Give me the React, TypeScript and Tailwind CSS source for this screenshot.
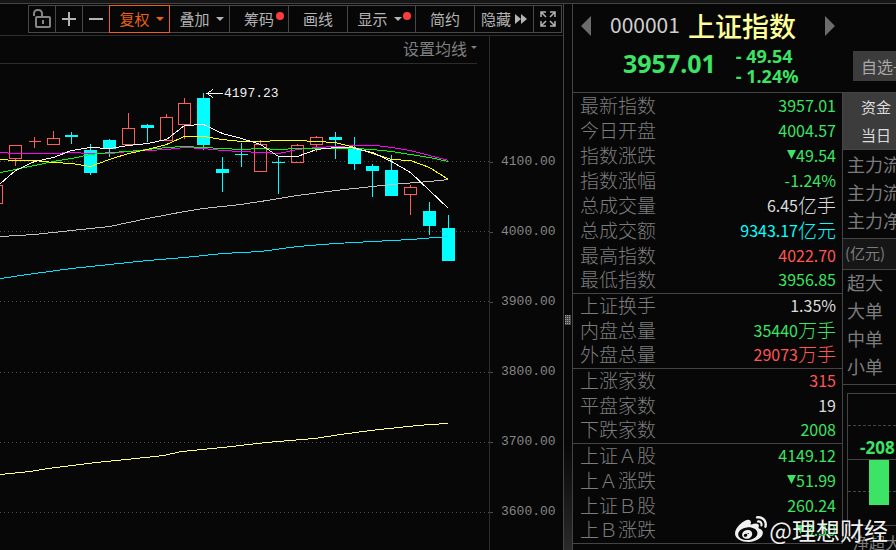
import React from 'react';
import { FaWeibo } from 'react-icons/fa';

const sans = "font-['Noto_Sans_CJK_SC',sans-serif]";
const latin = "font-['Noto_Sans',sans-serif]";
const mono = "font-['Liberation_Mono',monospace]";

type Tone = 'up' | 'down' | 'flat' | 'amount';

const toneClass: Record<Tone, string> = {
  up: 'text-[#ff5555]',
  down: 'text-[#3ce364]',
  flat: 'text-[#dcdcdc]',
  amount: 'text-[#00ffff]',
};

interface Quote {
  label: string;
  value: string;
  unit?: string;
  tone: Tone;
  falling?: boolean;
  last?: boolean;
}

const quotes: Quote[] = [
  { label: '最新指数', value: '3957.01', tone: 'down' },
  { label: '今日开盘', value: '4004.57', tone: 'down' },
  { label: '指数涨跌', value: '49.54', tone: 'down', falling: true },
  { label: '指数涨幅', value: '-1.24%', tone: 'down' },
  { label: '总成交量', value: '6.45', unit: '亿手', tone: 'flat' },
  { label: '总成交额', value: '9343.17', unit: '亿元', tone: 'amount' },
  { label: '最高指数', value: '4022.70', tone: 'up' },
  { label: '最低指数', value: '3956.85', tone: 'down', last: true },
  { label: '上证换手', value: '1.35%', tone: 'flat' },
  { label: '内盘总量', value: '35440', unit: '万手', tone: 'down' },
  { label: '外盘总量', value: '29073', unit: '万手', tone: 'up', last: true },
  { label: '上涨家数', value: '315', tone: 'up' },
  { label: '平盘家数', value: '19', tone: 'flat' },
  { label: '下跌家数', value: '2008', tone: 'down', last: true },
  { label: '上证Ａ股', value: '4149.12', tone: 'down' },
  { label: '上Ａ涨跌', value: '51.99', tone: 'down', falling: true },
  { label: '上证Ｂ股', value: '260.24', tone: 'down' },
  { label: '上Ｂ涨跌', value: '3.30', tone: 'down', falling: true, last: true },
];

// x, high, body top, body bottom, low, rising
type Candle = [number, number, number, number, number, boolean];

const candles: Candle[] = [
  [-4, 185, 185, 203, 203, true],
  [15, 145, 145, 158, 166, true],
  [34, 137, 141, 141, 148, true],
  [53, 131, 138, 144, 144, true],
  [71, 132, 135, 137, 144, false],
  [90, 144, 150, 173, 175, false],
  [109, 139, 140, 149, 157, false],
  [128, 113, 128, 144, 144, true],
  [147, 124, 125, 128, 142, false],
  [166, 114, 117, 140, 140, true],
  [184, 98, 103, 124, 139, true],
  [203, 93, 98, 145, 150, false],
  [222, 157, 169, 173, 192, false],
  [241, 143, 154, 155, 167, false],
  [260, 140, 144, 171, 171, true],
  [278, 156, 162, 163, 194, false],
  [297, 144, 145, 162, 162, true],
  [316, 136, 137, 144, 152, true],
  [335, 132, 137, 140, 159, false],
  [354, 137, 148, 164, 170, false],
  [372, 164, 166, 171, 197, false],
  [391, 155, 170, 196, 196, false],
  [410, 185, 187, 194, 215, true],
  [429, 202, 211, 226, 235, false],
  [448, 215, 228, 261, 261, false],
];

const averages = [
  {
    color: '#c0c0c0',
    points: '0,236 34,234 71,230 109,226 147,218 184,211 203,208 240,204 260,201 297,195 335,190 372,186 391,184 429,181 448,179',
  },
  {
    color: '#00e5ff',
    points: '0,278 34,273 71,268 109,264 147,260 184,257 222,253 260,251 297,246 335,243 372,241 410,239 448,236',
  },
  {
    color: '#ffff88',
    points: '0,474 30,471 48,468 96,462 126,459 163,455 181,451 222,447 266,442 314,438 340,434 370,430 407,426 429,424 448,423',
  },
  {
    color: '#ff00ff',
    points: '0,152 15,153 53,153 71,152 90,153 110,153 128,151 147,150 166,149 184,147 203,148 222,150 260,152 278,153 297,149 316,147 335,146 354,145 376,145 391,147 410,150 429,155 448,160',
  },
  {
    color: '#00ff00',
    points: '0,172 34,165 53,161 71,158 90,154 109,152 128,151 147,149 166,147 184,146 203,147 222,148 241,149 260,148 278,149 297,148 354,148 372,149 391,151 410,154 429,157 448,161',
  },
  {
    color: '#ffff00',
    points: '0,159 15,160 34,160 53,162 71,163 90,166 109,159 128,153 147,149 166,144 184,136 203,136 222,139 241,141 260,141 280,140 297,140 316,141 335,142 354,147 372,153 391,159 410,160 429,167 448,179',
  },
  {
    color: '#ffffff',
    points: '0,183 15,170 34,161 53,157 71,150 90,147 109,148 128,145 147,143 166,139 184,125 203,124 222,133 241,138 260,144 278,156 297,156 316,149 335,147 350,147 372,152 391,161 410,172 429,190 448,208',
  },
];

const gridLines = [161, 231, 301, 372, 442, 512];
const prices = ['4100.00', '4000.00', '3900.00', '3800.00', '3700.00', '3600.00'];

const Caret = () => (
  <svg className="h-1 w-2 shrink-0" viewBox="0 0 8 4" fill="currentColor">
    <path d="M0 0h8L4 4z" />
  </svg>
);

const Dot = () => <span className="absolute top-1.5 right-1 h-2 w-2 rounded-full bg-[#ff3c3c]" />;

interface ToolButtonProps {
  width: string;
  active?: boolean;
  label?: string;
  children: React.ReactNode;
}

const ToolButton: React.FC<ToolButtonProps> = ({ width, active, label, children }) => (
  <button
    type="button"
    aria-label={label}
    className={`relative -ml-px flex h-7 shrink-0 items-center justify-center border text-[15px] ${width} ${
      active ? 'z-10 border-[#f06010] text-[#f06010]' : 'border-[#484848] text-[#b4b4b4]'
    }`}
  >
    {children}
  </button>
);

const Toolbar = () => (
  <div className="flex h-[31px] shrink-0 items-start justify-end pt-px pr-px">
    <ToolButton width="w-7" label="解锁">
      <svg className="h-5 w-5" viewBox="0 0 20 20" fill="none" stroke="#858585" strokeWidth="2">
        <path d="M2 7V4.500a3.500 3.500 0 0 1 3.500-3.500h1a3.500 3.500 0 0 1 3.500 3.500V8" />
        <rect x="4" y="8" width="14" height="10" rx="1" />
        <path d="M11 11v4" />
      </svg>
    </ToolButton>
    <ToolButton width="w-7" label="放大">
      <svg className="h-4 w-4" viewBox="0 0 16 16" stroke="#b4b4b4" strokeWidth="2">
        <path d="M1 8h14M8 1v14" />
      </svg>
    </ToolButton>
    <ToolButton width="w-7" label="缩小">
      <svg className="h-4 w-4" viewBox="0 0 16 16" stroke="#b4b4b4" strokeWidth="2">
        <path d="M1 8h14" />
      </svg>
    </ToolButton>
    <ToolButton width="w-[61px] gap-1.5 pl-1" active>
      复权
      <Caret />
    </ToolButton>
    <ToolButton width="w-[61px] gap-1.5 pl-1">
      叠加
      <Caret />
    </ToolButton>
    <ToolButton width="w-[60px]">
      筹码
      <Dot />
    </ToolButton>
    <ToolButton width="w-[60px]">画线</ToolButton>
    <ToolButton width="w-[69px] gap-1.5 pr-1">
      显示
      <Caret />
      <Dot />
    </ToolButton>
    <ToolButton width="w-[60px]">简约</ToolButton>
    <ToolButton width="w-[60px] gap-1">
      隐藏
      <svg className="h-3 w-3" viewBox="0 0 12 12" fill="currentColor">
        <path d="M0 1l6 5-6 5zM6 1l6 5-6 5z" />
      </svg>
    </ToolButton>
    <ToolButton width="w-[29px]" label="全屏">
      <svg className="h-4 w-4" viewBox="0 0 16 16" fill="none" stroke="#b4b4b4" strokeWidth="1.500">
        <path d="M1 6V1h5M1 1l5 5M10 1h5v5M15 1l-5 5M1 10v5h5M1 15l5-5M15 10v5h-5M15 15l-5-5" />
      </svg>
    </ToolButton>
  </div>
);

const CandleChart = () => (
  <svg
    className="min-h-0 w-full flex-1"
    viewBox="0 64 489 486"
    preserveAspectRatio="xMinYMin meet"
    shapeRendering="crispEdges"
  >
    {gridLines.map((y) => (
      <path key={y} d={`M0 ${y + 0.5}H489`} stroke="#4c4c4c" strokeDasharray="1 3" />
    ))}
    {candles.map(([x, high, top, bottom, low, rising]) => (
      <g key={x} fill={rising ? 'none' : '#00ffff'} stroke={rising ? '#ff5c5c' : '#00ffff'}>
        <path d={`M${x + 0.5} ${high}V${top}M${x + 0.5} ${bottom}V${low}`} />
        {rising ? (
          <path d={`M${x - 5.5} ${top + 0.5}h12V${bottom + 0.5}h-12z`} />
        ) : (
          <rect x={x - 6} y={top} width="13" height={bottom - top} stroke="none" />
        )}
      </g>
    ))}
    <g fill="none" transform="translate(0.5 0.5)">
      {averages.map(({ color, points }) => (
        <polyline key={color} points={points} stroke={color} />
      ))}
    </g>
    <path d="M207 93.500H223M213 89.500L207 93.500L213 97.500" fill="none" stroke="#ffffff" />
    <text x="224" y="97" fill="#f0f0f0" fontSize="13" className={mono}>
      4197.23
    </text>
  </svg>
);

const PriceAxis = () => (
  <div className={`w-[74px] shrink-0 border-l border-[#2c2c2c] pt-[91px] text-[13px] text-[#868686] ${mono}`}>
    {prices.map((price) => (
      <div key={price} className="flex h-[70px] items-center gap-2">
        <span className="h-px w-[3px] bg-[#4c4c4c]" />
        {price}
      </div>
    ))}
  </div>
);

const ChartPanel = () => (
  <section className="flex min-w-0 flex-1 flex-col border-r border-[#444444]">
    <Toolbar />
    <div className="flex min-h-0 flex-1 overflow-hidden border-t border-[#2c2c2c]">
      <div className="flex min-w-0 flex-1 flex-col">
        <div className="mr-3 flex h-7 shrink-0 items-center justify-end border-b border-[#2c2c2c] pb-1">
          <button type="button" className="flex items-center gap-1 text-base text-[#808080]">
            设置均线
            <svg className="h-[3px] w-1.5" viewBox="0 0 6 3" fill="currentColor">
              <path d="M0 0h6L3 3z" />
            </svg>
          </button>
        </div>
        <CandleChart />
      </div>
      <PriceAxis />
    </div>
  </section>
);

const Splitter = () => (
  <div className="flex w-2 shrink-0 items-center justify-center bg-linear-to-b from-[#070707] from-80% to-[#2a2a2a] pt-[85px]">
    <svg className="h-2.5 w-1.5" viewBox="0 0 6 10" stroke="#a0a0a0" shapeRendering="crispEdges">
      <rect width="6" height="10" fill="#4c4c4c" stroke="none" />
      <path d="M0 .5h6M0 2.500h6M0 4.500h6M0 6.500h6M0 8.500h6" strokeDasharray="1 1" />
    </svg>
  </div>
);

const QuoteHeader = () => (
  <header className="flex h-[89px] shrink-0 border-b border-[#444444]">
    <div className="w-[270px] shrink-0">
      <div className="flex h-11 items-center pl-2">
        <button type="button" aria-label="上一个">
          <svg className="h-5 w-2.5" viewBox="0 0 10 20" fill="#6c6c6c">
            <path d="M10 0v20L0 10z" />
          </svg>
        </button>
        <span className="ml-[19px] pb-0.5 text-[21px] text-[#d0d0d0]">000001</span>
        <h1 className="ml-2 text-[27px] leading-8 font-medium text-[#ffff99]">上证指数</h1>
        <button type="button" aria-label="下一个" className="ml-[29px]">
          <svg className="h-5 w-2.5" viewBox="0 0 10 20" fill="#6c6c6c">
            <path d="M0 0v20l10-10z" />
          </svg>
        </button>
      </div>
      <div className={`flex h-10 items-center pb-1 pl-[50px] font-bold text-[#3ce364] ${latin}`}>
        <span className="pb-1 text-[25px]">3957.01</span>
        <span className="ml-5 text-lg leading-5">
          - 49.54
          <br />- 1.24%
        </span>
      </div>
    </div>
    <button type="button" className="mt-[47px] ml-2.5 h-[30px] w-20 shrink-0 bg-[#3c3c3c] pl-2 text-left text-base text-[#a8a8a8]">
      自选+
    </button>
  </header>
);

const QuoteTable = () => (
  <table className="w-[270px] shrink-0 table-fixed border-separate border-spacing-0 self-start border-r border-[#444444] pt-px">
    <tbody>
      {quotes.map(({ label, value, unit, tone, falling, last }) => (
        <tr key={label} className={`flex h-[25px] items-center justify-between pr-1.5 pb-1 pl-[7px] ${last ? 'border-b border-[#444444]' : ''}`}>
          <th scope="row" className="text-[19px] leading-6 font-light text-[#7c7c7c]">
            {label}
          </th>
          <td className={`flex items-center text-base leading-6 ${toneClass[tone]}`}>
            {falling && (
              <svg className="h-[9px] w-[9px]" viewBox="0 0 9 9" fill="currentColor">
                <path d="M0 0h9L4.500 9z" />
              </svg>
            )}
            {value}
            {unit && <span className="text-[19px] font-light">{unit}</span>}
          </td>
        </tr>
      ))}
    </tbody>
  </table>
);

const FundFlow = () => (
  <aside className="flex min-w-0 flex-1 flex-col overflow-hidden whitespace-nowrap text-[#7c7c7c]">
    <div className="flex h-[57px] shrink-0 flex-col items-start border-b border-[#444444] bg-[#3c3c3c] pl-[18px] text-[15px] leading-7 text-[#dcdcdc]">
      <button type="button">资金</button>
      <button type="button">当日</button>
    </div>
    <div className="h-[88px] shrink-0 pl-1 text-lg leading-7">
      <p>主力流入</p>
      <p>主力流出</p>
      <p>主力净额</p>
    </div>
    <p className="h-8 shrink-0 border-y border-[#444444] bg-[#161616] pl-0.5 text-[15px] leading-7">(亿元)</p>
    <div className="flex h-[115px] shrink-0 flex-col justify-end border-b border-[#444444] pb-1 pl-1 text-lg leading-7">
      <p>超大</p>
      <p>大单</p>
      <p>中单</p>
      <p>小单</p>
    </div>
    <div className="mt-2 ml-1 h-[133px] shrink-0 border border-r-0 border-[#444444]">
      <div className={`h-[66px] border-b border-[#444444] pl-3 text-[17px] font-bold text-[#3ce364] ${latin}`}>
        <div className="-ml-3 h-8 border-b border-dashed border-[#444444]" />
        <p className="pt-2.5 leading-6">-208</p>
      </div>
      <div className="flex h-8 border-b border-dashed border-[#444444] pl-[21px]">
        <div className="h-[45px] w-5 bg-[#3ce364]" />
      </div>
    </div>
    <p className="pl-2.5 text-base leading-8">净超大</p>
  </aside>
);

export default function App() {
  return (
    <div className={`relative flex h-screen flex-col overflow-hidden bg-[#070707] ${sans}`}>
      <div className="h-1 shrink-0 border-b border-[#444444] bg-[#161616]" />
      <main className="flex min-h-0 flex-1">
        <ChartPanel />
        <Splitter />
        <section className="flex w-[324px] shrink-0 flex-col overflow-hidden border-l border-[#444444]">
          <QuoteHeader />
          <div className="flex min-h-0 flex-1">
            <QuoteTable />
            <FundFlow />
          </div>
        </section>
      </main>
      <div className="absolute right-2 bottom-1 flex items-center gap-0.5 text-2xl leading-8 text-[#f0f0f0]">
        <FaWeibo className="h-8 w-8" />
        <span className="text-shadow-sm">@理想财经</span>
      </div>
    </div>
  );
}
